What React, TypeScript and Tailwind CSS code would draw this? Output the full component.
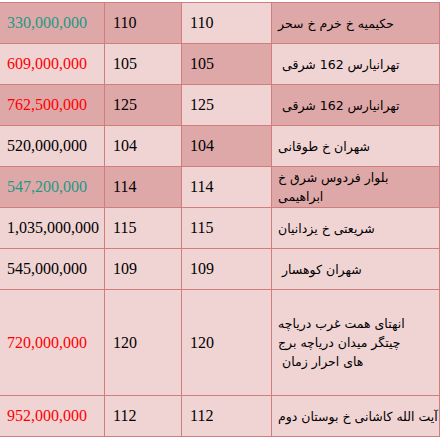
const DARK = "bg-[#dfa8a8]"
const LIGHT = "bg-[#f0d4d4]"

type Row = {
  price: string
  tone: "teal" | "red" | "black"
  a: string
  b: string
  addr: string[]
  shaded: boolean
  tall?: boolean
}

const rows: Row[] = [
  { price: "330,000,000", tone: "teal", a: "110", b: "110", addr: ["حکیمیه خ خرم خ سحر"], shaded: true },
  { price: "609,000,000", tone: "red", a: "105", b: "105", addr: [" تهرانیارس 162 شرقی"], shaded: false },
  { price: "762,500,000", tone: "red", a: "125", b: "125", addr: [" تهرانیارس 162 شرقی"], shaded: true },
  { price: "520,000,000", tone: "black", a: "104", b: "104", addr: ["شهران خ طوقانی"], shaded: false },
  { price: "547,200,000", tone: "teal", a: "114", b: "114", addr: ["بلوار فردوس شرق خ", "ابراهیمی"], shaded: true },
  { price: "1,035,000,000", tone: "black", a: "115", b: "115", addr: ["شریعتی خ یزدانیان"], shaded: false },
  { price: "545,000,000", tone: "black", a: "109", b: "109", addr: [" شهران کوهسار"], shaded: false },
  {
    price: "720,000,000",
    tone: "red",
    a: "120",
    b: "120",
    addr: ["انهتای همت غرب دریاچه", "چیتگر میدان دریاچه برج", " های احرار زمان"],
    shaded: false,
    tall: true,
  },
  { price: "952,000,000", tone: "red", a: "112", b: "112", addr: ["آیت الله کاشانی خ بوستان دوم"], shaded: false },
]

const toneClass = {
  teal: "text-[#1b9a85]",
  red: "text-[#ff0000]",
  black: "text-black",
}

export default function App() {
  return (
    <div className="h-[440px] w-[442px] overflow-hidden bg-white pt-[2px]">
      <div
        className="-ml-px grid w-[441px] grid-cols-[105px_77px_90px_168px] border-b border-r border-[#d27d7d] text-[16px] leading-[20px]"
        style={{ fontFamily: '"Liberation Serif", "DejaVu Sans", serif' }}
      >
        {rows.map((r, i) => {
          const h = r.tall ? "h-[106px]" : "h-[41px]"
          const side = r.shaded ? DARK : LIGHT
          const mid = r.shaded ? LIGHT : i < 5 ? DARK : LIGHT
          const cell = `flex items-center border-l border-t border-[#d27d7d] ${h}`
          return (
            <div key={i} className="contents">
              <div className={`${cell} ${side} pl-[7px] ${toneClass[r.tone]}`}>{r.price}</div>
              <div className={`${cell} ${side} pl-[8px] text-black`}>{r.a}</div>
              <div className={`${cell} ${mid} pl-[8px] text-black`}>{r.b}</div>
              <div className={`${cell} ${side} pl-[6px] text-black`}>
                <div className="whitespace-pre text-[12.5px] leading-[19px]" style={{ fontFamily: '"DejaVu Sans", sans-serif' }}>
                  {r.addr.map((l, j) => (
                    <div key={j}>{l}</div>
                  ))}
                </div>
              </div>
            </div>
          )
        })}
      </div>
    </div>
  )
}
